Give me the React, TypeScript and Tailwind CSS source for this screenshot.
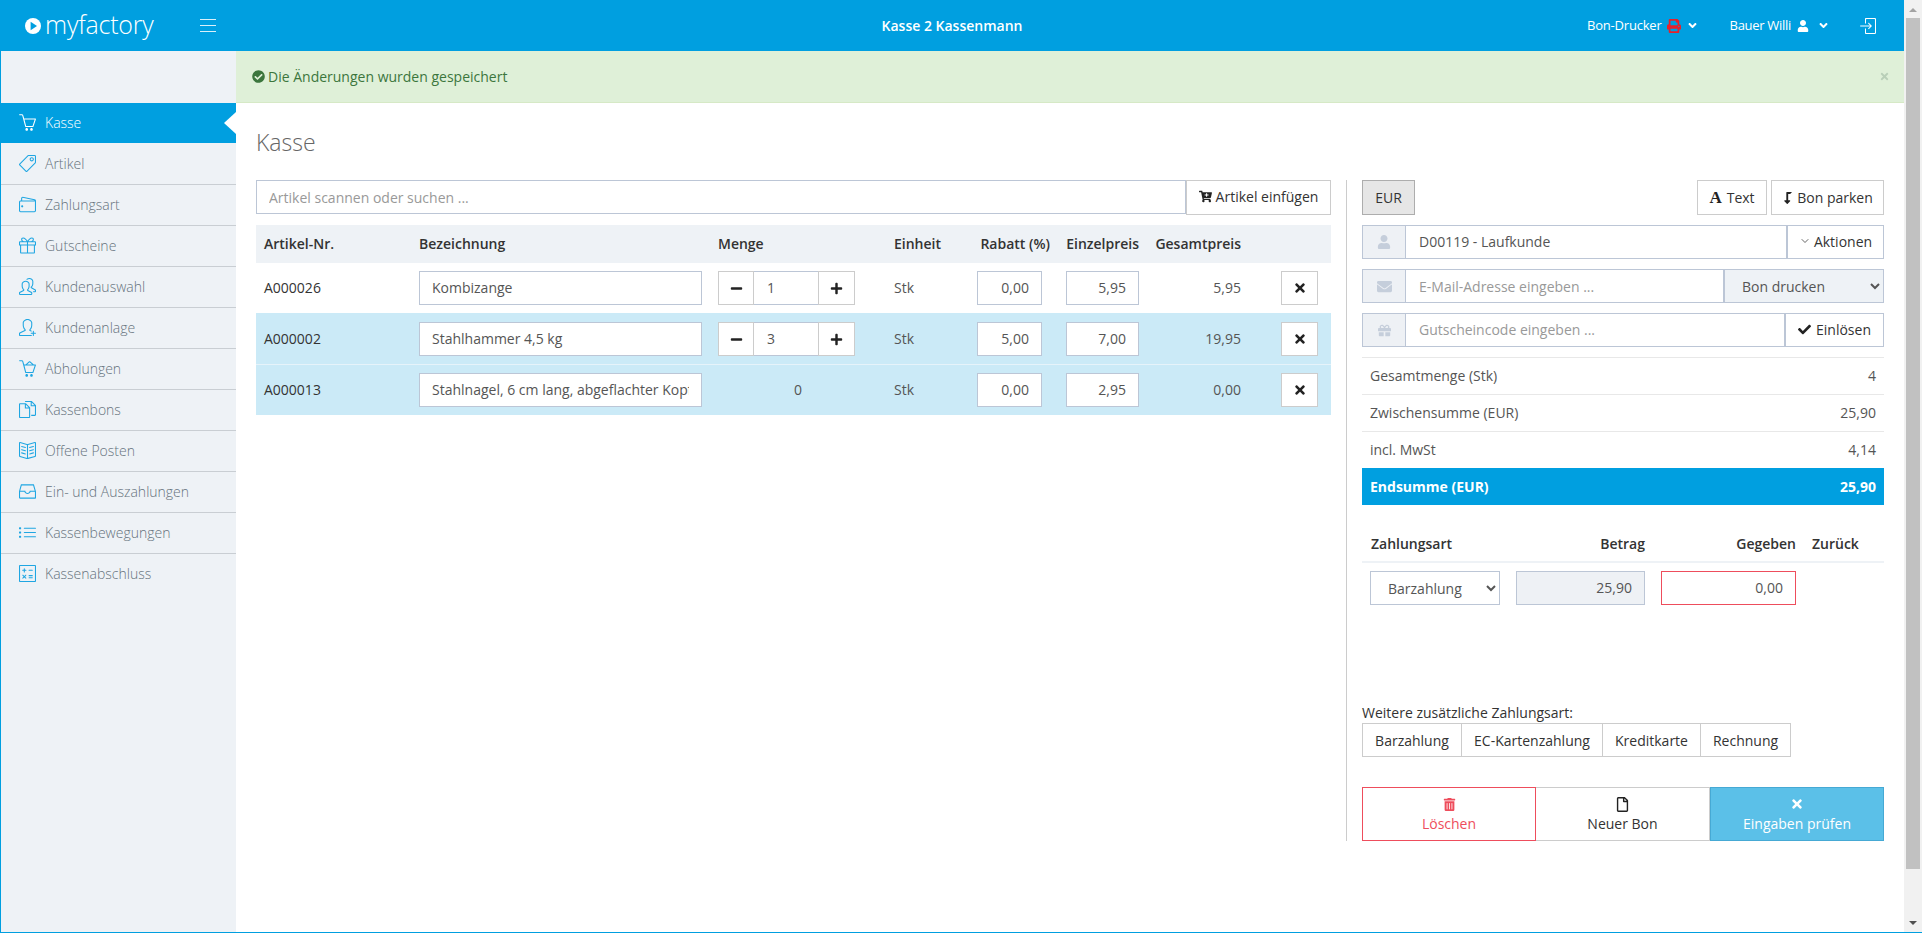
import type { ReactNode } from "react";
import { ChevronDown } from "lucide-react";
import {
  FaAngleDown,
  FaCartPlus,
  FaCheck,
  FaCheckCircle,
  FaEnvelope,
  FaGift,
  FaLevelDownAlt,
  FaMinus,
  FaPlus,
  FaPrint,
  FaRegFile,
  FaTimes,
  FaTrashAlt,
  FaUser,
} from "react-icons/fa";
import {
  SlBasket,
  SlBasketLoaded,
  SlBookOpen,
  SlCalculator,
  SlDocs,
  SlDrawer,
  SlList,
  SlLogin,
  SlPeople,
  SlPresent,
  SlTag,
  SlUserFollow,
  SlWallet,
} from "react-icons/sl";

const MENU_ITEMS = [
  { label: "Artikel", icon: SlTag },
  { label: "Zahlungsart", icon: SlWallet },
  { label: "Gutscheine", icon: SlPresent },
  { label: "Kundenauswahl", icon: SlPeople },
  { label: "Kundenanlage", icon: SlUserFollow },
  { label: "Abholungen", icon: SlBasketLoaded },
  { label: "Kassenbons", icon: SlDocs },
  { label: "Offene Posten", icon: SlBookOpen },
  { label: "Ein- und Auszahlungen", icon: SlDrawer },
  { label: "Kassenbewegungen", icon: SlList },
  { label: "Kassenabschluss", icon: SlCalculator },
];

const ARTICLES = [
  { nr: "A000026", name: "Kombizange", qty: "1", discount: "0,00", price: "5,95", total: "5,95", tone: "white" },
  { nr: "A000002", name: "Stahlhammer 4,5 kg", qty: "3", discount: "5,00", price: "7,00", total: "19,95", tone: "blue" },
  { nr: "A000013", name: "Stahlnagel, 6 cm lang, abgeflachter Kopf", qty: "", discount: "0,00", price: "2,95", total: "0,00", tone: "blue" },
];

const SUMMARY = [
  { label: "Gesamtmenge (Stk)", value: "4" },
  { label: "Zwischensumme (EUR)", value: "25,90" },
  { label: "incl. MwSt", value: "4,14" },
];

const TABLE_COLS = "grid grid-cols-[155px_299px_176px_83px_89px_89px_102px_82px] items-center";
const FIELD = "h-[34px] border border-[#bcc6d6] bg-white text-[14px] text-[#555] outline-none placeholder:text-[#999]";
const PLAIN_BTN = "flex items-center justify-center border border-[#ccc] bg-white text-[14px] text-[#333]";

function Logo() {
  return (
    <svg width="16" height="16" viewBox="0 0 16 16" className="shrink-0">
      <circle cx="8" cy="8" r="8" fill="#fff" />
      <path d="M5.6 3.8 12 8l-6.4 4.2z" fill="#009fe0" />
    </svg>
  );
}

function Hamburger() {
  return (
    <svg width="16" height="13" viewBox="0 0 16 13" className="shrink-0" stroke="#fff" strokeWidth="1" opacity="0.85">
      <path d="M0 .5h16M0 6.5h16M0 12.5h16" />
    </svg>
  );
}

function Header() {
  return (
    <header className="flex h-[51px] shrink-0 items-center bg-[#009fe0] text-[14px] text-white">
      <div className="flex w-[236px] items-center pl-[24px]">
        <Logo />
        <span className="ml-[4px] pb-[3px] text-[25px] leading-none font-light tracking-[-0.2px]">myfactory</span>
        <span className="ml-[46px]">
          <Hamburger />
        </span>
      </div>
      <div className="flex-1 pl-[80px] text-center font-semibold">Kasse 2 Kassenmann</div>
      <div className="flex w-[317px] items-center text-[13px]">
        <span className="tracking-[-0.2px]">Bon-Drucker</span>
        <FaPrint className="ml-[5px] text-[14px] text-[#e8202a]" />
        <FaAngleDown className="ml-[5px] text-[13px]" />
        <span className="ml-[31px] tracking-[-0.3px]">Bauer Willi</span>
        <FaUser className="ml-[6px] text-[12px]" />
        <FaAngleDown className="ml-[8px] text-[13px]" />
        <SlLogin className="ml-[30px] text-[16px]" />
      </div>
    </header>
  );
}

function Sidebar() {
  return (
    <aside className="flex w-[235px] shrink-0 flex-col bg-[#eef2f6] pt-[52px] text-[14px] font-light">
      <div className="relative flex h-[40px] items-center bg-[#009fe0] pb-[1px] pl-[18px] text-white">
        <SlBasket className="text-[17px]" />
        <span className="ml-[9px]">Kasse</span>
        <span className="absolute top-[9px] right-0 h-0 w-0 border-y-[11px] border-r-[12px] border-y-transparent border-r-white" />
      </div>
      {MENU_ITEMS.map((item, index) => (
        <div
          key={item.label}
          className={`flex h-[41px] items-center pl-[18px] text-[#66727d] ${
            index > 0 ? "border-t border-[#c9ced3] pb-[1px]" : ""
          }`}
        >
          <item.icon className="text-[17px] text-[#1fa6e2]" />
          <span className="ml-[9px]">{item.label}</span>
        </div>
      ))}
    </aside>
  );
}

function ArticleRow({ article, first }: { article: (typeof ARTICLES)[number]; first: boolean }) {
  const rowColor = article.tone === "blue" ? "bg-[#cbeaf7]" : "bg-white";
  const borderColor = first ? "border-[#eef2f6]" : article.qty === "" ? "border-[#e6f3fa]" : "border-[#cbeaf7]";

  return (
    <div className={`${TABLE_COLS} h-[51px] border-t text-[14px] text-[#333] ${rowColor} ${borderColor}`}>
      <div className="pb-[2px] pl-[8px]">{article.nr}</div>
      <div className="px-[8px]">
        <input readOnly value={article.name} className={`${FIELD} w-full px-[12px] pb-[2px]`} />
      </div>
      {article.qty ? (
        <div className="flex pl-[8px]">
          <button className="flex h-[34px] w-[36px] items-center justify-center border border-[#ccc] bg-white text-[#222]">
            <FaMinus className="text-[13px]" />
          </button>
          <input
            readOnly
            value={article.qty}
            className="h-[34px] w-[64px] border-y border-[#bcc6d6] bg-white px-[13px] pb-[2px] text-[14px] text-[#555] outline-none"
          />
          <button className="flex h-[34px] w-[37px] items-center justify-center border border-[#ccc] bg-white text-[#222]">
            <FaPlus className="text-[13px]" />
          </button>
        </div>
      ) : (
        <div className="pb-[2px] text-center text-[#555]">0</div>
      )}
      <div className="pb-[2px] pl-[8px] text-[#555]">Stk</div>
      <div className="pl-[8px]">
        <input readOnly value={article.discount} className={`${FIELD} w-[65px] px-[12px] pb-[2px] text-right`} />
      </div>
      <div className="pl-[8px]">
        <input readOnly value={article.price} className={`${FIELD} w-[73px] px-[12px] pb-[2px] text-right`} />
      </div>
      <div className="pr-[8px] pb-[2px] text-right text-[#555]">{article.total}</div>
      <div className="flex justify-end pr-[13px]">
        <button className={`${PLAIN_BTN} h-[34px] w-[37px]`}>
          <FaTimes className="text-[14px] text-[#222]" />
        </button>
      </div>
    </div>
  );
}

function ArticlePanel() {
  return (
    <section className="w-[1075px] shrink-0">
      <div className="flex">
        <input
          readOnly
          placeholder="Artikel scannen oder suchen ..."
          className={`${FIELD} flex-1 px-[12px]`}
        />
        <button className={`${PLAIN_BTN} h-[35px] w-[145px] gap-[4px] pb-[2px]`}>
          <FaCartPlus className="text-[13px] text-[#222]" />
          Artikel einfügen
        </button>
      </div>
      <div className={`${TABLE_COLS} mt-[10px] h-[37px] bg-[#eef2f6] text-[14px] font-semibold text-[#333]`}>
        <div className="pl-[8px]">Artikel-Nr.</div>
        <div className="pl-[8px]">Bezeichnung</div>
        <div className="pl-[8px]">Menge</div>
        <div className="pl-[8px]">Einheit</div>
        <div className="pr-[8px] text-right whitespace-nowrap">Rabatt (%)</div>
        <div className="pr-[8px] text-right">Einzelpreis</div>
        <div className="pr-[8px] text-right">Gesamtpreis</div>
        <div />
      </div>
      {ARTICLES.map((article, index) => (
        <ArticleRow key={article.nr} article={article} first={index === 0} />
      ))}
    </section>
  );
}

function InputAddon({ children }: { children: ReactNode }) {
  return (
    <span className="flex h-[34px] w-[44px] shrink-0 items-center justify-center border border-[#bcc6d6] bg-[#eef1f5] text-[#c5cedb]">
      {children}
    </span>
  );
}

function ActionButton({ icon, label, className }: { icon: ReactNode; label: string; className: string }) {
  return (
    <button className={`flex h-[54px] w-[174px] flex-col items-center pt-[8px] text-[14px] ${className}`}>
      <span className="flex h-[16px] items-center">{icon}</span>
      <span className="mt-[2px] leading-[20px]">{label}</span>
    </button>
  );
}

function CheckoutPanel() {
  return (
    <section className="ml-[15px] h-[661px] w-[538px] shrink-0 border-l border-[#ccc] pl-[15px]">
      <div className="flex items-center">
        <button className="flex h-[35px] w-[53px] items-center justify-center border border-[#adadad] bg-[#e6e6e6] text-[14px] text-[#333]">
          EUR
        </button>
        <button className={`${PLAIN_BTN} ml-auto h-[35px] w-[70px] gap-[5px]`}>
          <span className="font-['Liberation_Serif',serif] text-[17px] leading-none font-bold text-[#222]">A</span>
          Text
        </button>
        <button className={`${PLAIN_BTN} ml-[4px] h-[35px] w-[113px] gap-[3px]`}>
          <FaLevelDownAlt className="-scale-x-100 text-[12px] text-[#222]" />
          Bon parken
        </button>
      </div>

      <div className="mt-[10px] flex">
        <InputAddon>
          <FaUser className="text-[14px]" />
        </InputAddon>
        <input readOnly value="D00119 - Laufkunde" className={`${FIELD} flex-1 border-l-0 px-[13px] pb-[2px]`} />
        <button className="flex h-[34px] w-[97px] items-center justify-center gap-[3px] border border-[#bcc6d6] bg-white pb-[2px] text-[14px] text-[#333]">
          <ChevronDown size={12} strokeWidth={1.5} />
          Aktionen
        </button>
      </div>

      <div className="mt-[10px] flex">
        <InputAddon>
          <FaEnvelope className="text-[15px]" />
        </InputAddon>
        <input readOnly placeholder="E-Mail-Adresse eingeben ..." className={`${FIELD} flex-1 border-l-0 px-[13px]`} />
        <select className="h-[34px] w-[160px] border border-[#bcc6d6] bg-[#eef2f6] px-[13px] text-[14px] text-[#555] outline-none">
          <option>Bon drucken</option>
        </select>
      </div>

      <div className="mt-[10px] flex">
        <InputAddon>
          <FaGift className="text-[13px]" />
        </InputAddon>
        <input readOnly placeholder="Gutscheincode eingeben ..." className={`${FIELD} flex-1 border-l-0 px-[13px] pb-[2px]`} />
        <button className="flex h-[34px] w-[99px] items-center justify-center gap-[5px] border border-[#bcc6d6] bg-white pb-[2px] text-[14px] text-[#333]">
          <FaCheck className="text-[13px] text-[#222]" />
          Einlösen
        </button>
      </div>

      <div className="mt-[10px]">
        {SUMMARY.map((row) => (
          <div key={row.label} className="flex h-[37px] items-center justify-between border-t border-[#e8e8e8] px-[8px] pb-[2px] text-[14px] text-[#555]">
            <span>{row.label}</span>
            <span>{row.value}</span>
          </div>
        ))}
        <div className="flex h-[37px] items-center justify-between bg-[#009fe0] px-[8px] text-[14px] font-bold text-white">
          <span>Endsumme (EUR)</span>
          <span>25,90</span>
        </div>
      </div>

      <div className="mt-[21px] flex h-[37px] items-center border-b-2 border-[#eef2f6] pb-[1px] text-[14px] font-semibold text-[#333]">
        <span className="flex w-[283px] justify-between pl-[9px]">
          <span>Zahlungsart</span>
          <span>Betrag</span>
        </span>
        <span className="w-[151px] text-right">Gegeben</span>
        <span className="ml-[16px]">Zurück</span>
      </div>
      <div className="mt-[8px] flex pl-[8px]">
        <select className="h-[34px] w-[130px] border border-[#bcc6d6] bg-white px-[13px] text-[14px] text-[#555] outline-none">
          <option>Barzahlung</option>
        </select>
        <input
          readOnly
          value="25,90"
          className="ml-[16px] h-[34px] w-[129px] border border-[#bcc6d6] bg-[#eef1f5] px-[12px] pb-[2px] text-right text-[14px] text-[#555] outline-none"
        />
        <input
          readOnly
          value="0,00"
          className="ml-[16px] h-[34px] w-[135px] border border-[#ee4d5c] bg-white px-[12px] pb-[2px] text-right text-[14px] text-[#555] outline-none"
        />
      </div>

      <div className="mt-[98px] text-[14px] leading-[20px] text-[#333]">Weitere zusätzliche Zahlungsart:</div>
      <div className="flex">
        <button className={`${PLAIN_BTN} h-[34px] w-[100px]`}>Barzahlung</button>
        <button className={`${PLAIN_BTN} -ml-px h-[34px] w-[142px]`}>EC-Kartenzahlung</button>
        <button className={`${PLAIN_BTN} -ml-px h-[34px] w-[99px]`}>Kreditkarte</button>
        <button className={`${PLAIN_BTN} -ml-px h-[34px] w-[91px]`}>Rechnung</button>
      </div>

      <div className="mt-[30px] flex">
        <ActionButton
          icon={<FaTrashAlt className="text-[13px]" />}
          label="Löschen"
          className="border border-[#ee4d5c] bg-white text-[#ee4d5c]"
        />
        <ActionButton
          icon={<FaRegFile className="text-[15px] text-[#222]" />}
          label="Neuer Bon"
          className="border-y border-r border-[#ccc] bg-white text-[#333]"
        />
        <ActionButton
          icon={<FaTimes className="text-[14px]" />}
          label="Eingaben prüfen"
          className="border border-[#46a9d4] bg-[#5bc0e8] text-white"
        />
      </div>
    </section>
  );
}

function ScrollBar() {
  return (
    <div className="flex w-[18px] shrink-0 flex-col items-center bg-[#f1f1f1]">
      <div className="mt-[8px] h-0 w-0 border-x-[4px] border-b-[4px] border-x-transparent border-b-[#a3a3a3]" />
      <div className="mt-[6px] h-[851px] w-[14px] bg-[#c1c1c1]" />
      <div className="mt-[52px] h-0 w-0 border-x-[4px] border-t-[4px] border-x-transparent border-t-[#505050]" />
    </div>
  );
}

export default function App() {
  return (
    <div className="flex h-[933px] w-[1922px] overflow-hidden border-b border-l border-[#009fe0] bg-white font-['Open_Sans',sans-serif]">
      <div className="flex min-w-0 flex-1 flex-col">
        <Header />
        <div className="-mt-px flex flex-1 pt-px">
          <Sidebar />
          <main className="min-w-0 flex-1">
            <div className="flex h-[52px] items-center justify-between border-b border-[#d6e9c6] bg-[#dff0d8] pr-[14px] pl-[16px] text-[14px] text-[#3c763d]">
              <span className="flex items-center gap-[3px]">
                <FaCheckCircle className="text-[13px]" />
                Die Änderungen wurden gespeichert
              </span>
              <FaTimes className="text-[11px] text-[#b9cfb8]" />
            </div>
            <h1 className="mt-[22px] pl-[20px] text-[23px] leading-[34px] font-light text-[#666]">Kasse</h1>
            <div className="mt-[21px] flex pl-[20px]">
              <ArticlePanel />
              <CheckoutPanel />
            </div>
          </main>
        </div>
      </div>
      <ScrollBar />
    </div>
  );
}
